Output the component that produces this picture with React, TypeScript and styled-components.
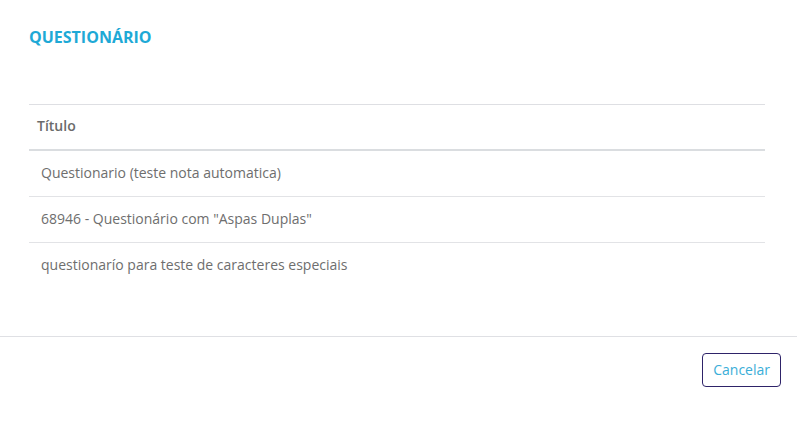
import React from 'react';
import styled, { createGlobalStyle } from 'styled-components';

const GlobalStyle = createGlobalStyle`
  html, body {
    margin: 0;
    padding: 0;
    background: #ffffff;
    font-family: 'Open Sans', 'Liberation Sans', sans-serif;
  }
`;

const rows = [
  'Questionario (teste nota automatica)',
  '68946 - Questionário com "Aspas Duplas"',
  'questionarío para teste de caracteres especiais',
];

const Dialog = styled.div`
  width: 797px;
  height: 440px;
  display: flex;
  flex-direction: column;
  background: #fff;
`;

const Body = styled.div`
  padding: 27px 32px 0 29px;
  height: 336px;
  box-sizing: border-box;
`;

const Title = styled.h2`
  margin: 0;
  font-size: 16px;
  line-height: 20px;
  font-weight: 700;
  color: #1ea9d6;
  text-transform: uppercase;
`;

const Table = styled.table`
  margin-top: 57px;
  width: 100%;
  border-collapse: collapse;
  border-top: 1px solid #dedfe3;
`;

const HeadCell = styled.th`
  text-align: left;
  padding: 0 8px 3px;
  height: 41px;
  font-size: 14px;
  font-weight: 600;
  color: #6b6b6b;
  border-bottom: 2px solid #dadde0;
`;

const Cell = styled.td<{ $last?: boolean }>`
  padding: 0 12px 3px;
  height: 42px;
  font-size: 14px;
  color: #6e6e6e;
  border-bottom: ${(p) => (p.$last ? 'none' : '1px solid #e2e3e6')};
`;

const Footer = styled.div`
  border-top: 1px solid #dfe0e4;
  display: flex;
  justify-content: flex-end;
  padding: 16px 16px 0 0;
`;

const Button = styled.button`
  height: 34px;
  padding: 0 10px 2px;
  background: #fff;
  border: 1px solid #2e2369;
  border-radius: 4px;
  color: #3aaed8;
  font-family: 'Open Sans', 'Liberation Sans', sans-serif;
  font-size: 14px;
  cursor: pointer;
`;

export default function App() {
  return (
    <Dialog>
      <GlobalStyle />
      <Body>
        <Title>Questionário</Title>
        <Table>
          <thead>
            <tr>
              <HeadCell>Título</HeadCell>
            </tr>
          </thead>
          <tbody>
            {rows.map((r, i) => (
              <tr key={r}>
                <Cell $last={i === rows.length - 1}>{r}</Cell>
              </tr>
            ))}
          </tbody>
        </Table>
      </Body>
      <Footer>
        <Button>Cancelar</Button>
      </Footer>
    </Dialog>
  );
}
